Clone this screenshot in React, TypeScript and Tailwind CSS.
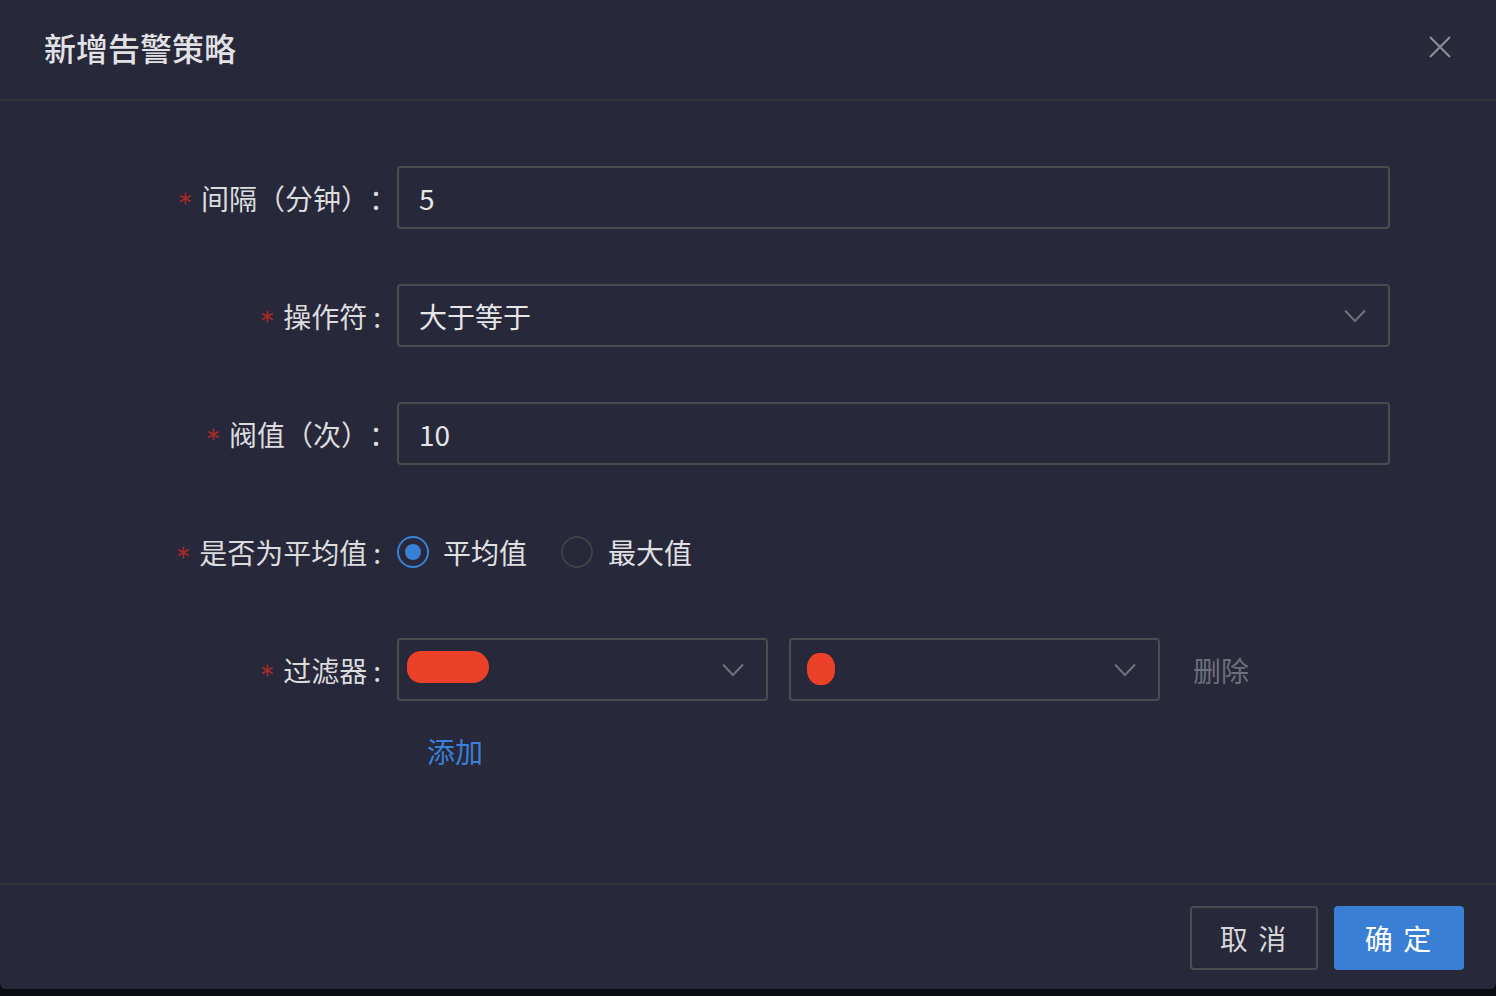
import React from "react";

const font = { fontFamily: '"Noto Sans CJK SC", "Noto Sans", sans-serif' };

function Chevron() {
  return (
    <svg width="22" height="14" viewBox="0 0 22 14" fill="none">
      <path d="M1 1.5 L11 12 L21 1.5" stroke="#6f717c" strokeWidth="2" />
    </svg>
  );
}

function Star() {
  return (
    <svg width="13" height="13" viewBox="0 0 12 12" className="mr-[9px] mt-[2px]">
      <path d="M6 0.5 V11.5 M1.2 3.2 L10.8 8.8 M10.8 3.2 L1.2 8.8" stroke="#a82a2a" strokeWidth="1.5" />
    </svg>
  );
}

function Label({ text, colon }: { text: string; colon?: boolean }) {
  return (
    <div className={`flex w-[397px] shrink-0 items-center justify-end ${colon ? "pr-[16px]" : ""}`}>
      <Star />
      <span className="text-[28px] text-[#dcdcdf] [text-spacing-trim:space-all]">{text}</span>
      {colon && <span className="ml-[6px] text-[28px] text-[#dcdcdf]">:</span>}
    </div>
  );
}

function Row({ children }: { children: React.ReactNode }) {
  return <div className="flex h-[63px] items-center">{children}</div>;
}

export default function App() {
  return (
    <div className="h-[996px] w-[1496px] bg-[#0c0d12]" style={font}>
      <div className="flex h-[989px] flex-col rounded-b-[6px] bg-[#272839]">
        <div className="flex h-[101px] shrink-0 items-center justify-between border-b-2 border-[#34353b] pb-[6px] pl-[44px] pr-[44px]">
          <h1 className="text-[32px] font-medium text-[#e2e2e6]">新增告警策略</h1>
          <svg width="24" height="24" viewBox="0 0 24 24" fill="none">
            <path d="M2 2 L22 22 M22 2 L2 22" stroke="#8c8d96" strokeWidth="2.2" />
          </svg>
        </div>

        <div className="flex flex-1 flex-col gap-[55px] pt-[65px]">
          <Row>
            <Label text="间隔（分钟）：" />
            <div className="flex h-[63px] w-[993px] items-center rounded-[4px] border-2 border-[#4b4c50] px-[20px] text-[28px] text-[#e6e6e8]">
              5
            </div>
          </Row>

          <Row>
            <Label text="操作符" colon />
            <div className="flex h-[63px] w-[993px] items-center justify-between rounded-[4px] border-2 border-[#4b4c50] pl-[20px] pr-[22px] text-[28px] text-[#e6e6e8]">
              <span>大于等于</span>
              <Chevron />
            </div>
          </Row>

          <Row>
            <Label text="阀值（次）：" />
            <div className="flex h-[63px] w-[993px] items-center rounded-[4px] border-2 border-[#4b4c50] px-[20px] text-[28px] text-[#e6e6e8]">
              10
            </div>
          </Row>

          <Row>
            <Label text="是否为平均值" colon />
            <div className="flex items-center text-[28px] text-[#e0e0e3]">
              <span className="flex h-[32px] w-[32px] items-center justify-center rounded-full border-2 border-[#3a80d8]">
                <span className="h-[16px] w-[16px] rounded-full bg-[#3a80d8]" />
              </span>
              <span className="ml-[14px]">平均值</span>
              <span className="ml-[34px] h-[32px] w-[32px] rounded-full border-2 border-[#404146]" />
              <span className="ml-[15px]">最大值</span>
            </div>
          </Row>

          <div className="flex flex-col">
            <Row>
              <Label text="过滤器" colon />
              <div className="relative flex h-[63px] w-[371px] items-center justify-end rounded-[4px] border-2 border-[#4b4c50] pr-[22px]">
                <div className="absolute left-[8px] top-[11px] h-[32px] w-[82px] rounded-[14px_16px_16px_14px] bg-[#ea4128]" />
                <Chevron />
              </div>
              <div className="relative ml-[21px] flex h-[63px] w-[371px] items-center justify-end rounded-[4px] border-2 border-[#4b4c50] pr-[22px]">
                <div className="absolute left-[16px] top-[13px] h-[32px] w-[28px] rounded-[45%] bg-[#ea4128]" />
                <Chevron />
              </div>
              <span className="ml-[33px] text-[28px] text-[#6d6f7a]">删除</span>
            </Row>
            <div className="ml-[427px] mt-[29px] text-[28px] text-[#3a80d8]">添加</div>
          </div>
        </div>

        <div className="flex h-[106px] shrink-0 items-center justify-end gap-[16px] border-t-2 border-[#303137] pr-[32px] pt-[2px]">
          <button className="h-[64px] w-[128px] rounded-[4px] border-2 border-[#4b4c50] text-[28px] tracking-[2px] text-[#d6d6da]">
            取 消
          </button>
          <button className="h-[64px] w-[130px] rounded-[4px] bg-[#3a7fd6] text-[28px] tracking-[2px] text-white">
            确 定
          </button>
        </div>
      </div>
    </div>
  );
}
